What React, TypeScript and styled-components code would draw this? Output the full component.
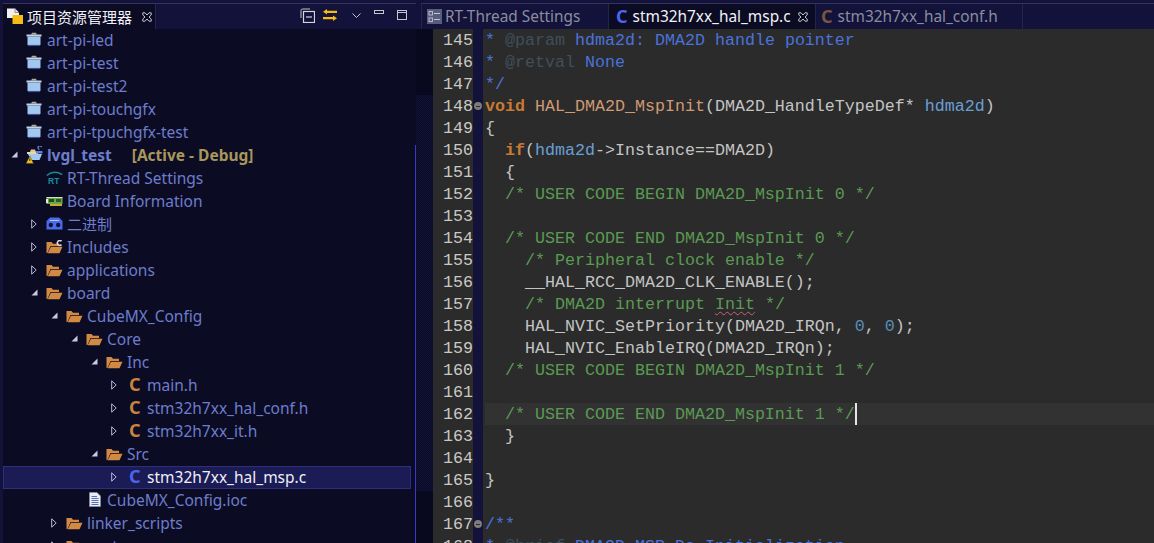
import React from "react";
import styled, { createGlobalStyle } from "styled-components";

const GlobalStyle = createGlobalStyle`
  html, body {
    margin: 0;
    padding: 0;
    background: #12123a;
    overflow: hidden;
  }
`;

const uiFont = `"Noto Sans", "Noto Sans CJK SC", sans-serif`;
const codeFont = `"Liberation Mono", "DejaVu Sans Mono", monospace`;

const Page = styled.div`
  display: flex;
  width: 1154px;
  height: 543px;
  overflow: hidden;
  background: #12123a;
`;

const LeftPanel = styled.div`
  display: flex;
  flex-direction: column;
  width: 413px;
  margin-left: 3px;
  flex-shrink: 0;
`;

const ViewHeader = styled.div`
  display: flex;
  align-items: stretch;
  height: 26px;
  margin-top: 3px;
  border-top: 1px solid #34345e;
  box-sizing: border-box;
  background: #12123a;
  flex-shrink: 0;
`;

const ViewTab = styled.div`
  display: flex;
  align-items: center;
  width: 153px;
  padding-left: 4px;
  box-sizing: border-box;
  background: #0b0b24;
  border-right: 1px solid #25254c;
  color: #f2f2f6;
  font: 15px ${uiFont};
`;

const ViewTitle = styled.span`
  margin-left: 4px;
  width: 108px;
  white-space: nowrap;
`;

const ViewTools = styled.div`
  display: flex;
  align-items: center;
  margin-left: 144px;
  padding-bottom: 3px;
  gap: 8px;
`;

const ToolIcon = styled.svg<{ $left?: number; $lift?: number }>`
  display: block;
  flex-shrink: 0;
  margin-left: ${(p) => p.$left ?? 0}px;
  margin-bottom: ${(p) => p.$lift ?? 0}px;
`;

const PanelBody = styled.div`
  display: flex;
  flex: 1;
  min-height: 0;
  background: #0b0b24;
`;

const Tree = styled.div`
  width: 408px;
  flex-shrink: 0;
  overflow: hidden;
`;

const ScrollTrack = styled.div`
  flex: 1;
  display: flex;
  justify-content: flex-end;
`;

const ScrollThumb = styled.div`
  width: 1px;
  margin-top: 116px;
  background: #3a3ac4;
`;

const Row = styled.div<{ $depth: number; $selected?: boolean }>`
  display: flex;
  align-items: center;
  height: 23px;
  box-sizing: border-box;
  padding-left: ${(p) => 4 + p.$depth * 20}px;
  padding-bottom: 2px;
  white-space: nowrap;
  font: 15.5px ${uiFont};
  color: ${(p) => (p.$selected ? "#eeeef6" : "#6d7dcb")};
  background: ${(p) => (p.$selected ? "#1b1b55" : "transparent")};
  outline: ${(p) => (p.$selected ? "1px solid #2e2e7c" : "none")};
  outline-offset: -1px;
`;

const Twist = styled.span`
  display: flex;
  align-items: center;
  justify-content: flex-start;
  width: 20px;
  height: 23px;
  padding-left: 4px;
  box-sizing: border-box;
  flex-shrink: 0;
`;

const IconSlot = styled.span<{ $inset: number }>`
  display: flex;
  align-items: center;
  justify-content: flex-start;
  width: 20px;
  height: 23px;
  flex-shrink: 0;
  & > * {
    margin-left: ${(p) => p.$inset}px;
  }
`;

const CIcon = styled.span<{ $color: string }>`
  display: block;
  font: bold 18px/23px ${uiFont};
  color: ${(p) => p.$color};
`;

const CjkLabel = styled.span`
  font-size: 15px;
`;

const BoldName = styled.span`
  font-weight: 700;
`;

const ActiveTag = styled.span`
  margin-left: 20px;
  font-weight: 700;
  color: #a8965a;
`;

const EditorArea = styled.div`
  display: flex;
  flex-direction: column;
  flex: 1;
  min-width: 0;
`;

const EditorTabs = styled.div`
  display: flex;
  align-items: stretch;
  height: 26px;
  margin-top: 3px;
  margin-left: 5px;
  border-top: 1px solid #34345e;
  box-sizing: border-box;
  background: #12123a;
  flex-shrink: 0;
  border-left: 1px solid #25254c;
`;

const EditorTab = styled.div<{ $width: number; $active?: boolean }>`
  display: flex;
  align-items: center;
  width: ${(p) => p.$width}px;
  padding-left: ${(p) => (p.$active ? 7 : 5)}px;
  box-sizing: border-box;
  flex-shrink: 0;
  background: ${(p) => (p.$active ? "#0b0b24" : "transparent")};
  border-right: 1px solid #25254c;
  color: ${(p) => (p.$active ? "#f2f2f6" : "#8b8d9f")};
  font: 15.4px ${uiFont};
  white-space: nowrap;
`;

const TabLabel = styled.span<{ $gap: number }>`
  margin-left: ${(p) => p.$gap}px;
`;

const TabClose = styled.span`
  display: flex;
  margin-left: 7px;
`;

const EditorBody = styled.div`
  display: flex;
  flex: 1;
  min-height: 0;
  background: #2b2b2b;
`;

const Ruler = styled.div`
  display: flex;
  flex-direction: column;
  width: 17px;
  flex-shrink: 0;
  background: #08081f;
`;

const RulerHatch = styled.div`
  height: 396px;
  margin-top: 66px;
  background-image: repeating-conic-gradient(#121238 0 25%, #0a0a24 0 50%);
  background-size: 2px 2px;
`;

const CodeLines = styled.div`
  flex: 1;
  min-width: 0;
  overflow: hidden;
`;

const CodeRow = styled.div`
  display: flex;
  height: 22px;
  font: 16.67px/24px ${codeFont};
  color: #c4c4c4;
`;

const LineNo = styled.div`
  width: 40px;
  text-align: right;
  color: #c9c9c4;
  flex-shrink: 0;
`;

const FoldCell = styled.div`
  display: flex;
  align-items: center;
  justify-content: center;
  width: 10px;
  background: #12123a;
  flex-shrink: 0;
`;

const FoldDot = styled.span`
  display: flex;
  align-items: center;
  justify-content: center;
  width: 8px;
  height: 8px;
  border-radius: 50%;
  background: #7c7c7c;
  &::after {
    content: "";
    width: 4px;
    height: 1px;
    background: #2b2b2b;
  }
`;

const CodeText = styled.div<{ $current?: boolean }>`
  flex: 1;
  margin-left: 2px;
  white-space: pre;
  background: ${(p) => (p.$current ? "#323232" : "transparent")};
`;

const tokenColors = {
  doc: "#4a72dc",
  tag: "#3f4f5c",
  kw: "#c97a34",
  fn: "#cf9a74",
  cm: "#5a9a52",
  var: "#6a9fd4",
  num: "#5b8db5",
};

const Tok = styled.span<{ $k: keyof typeof tokenColors }>`
  color: ${(p) => tokenColors[p.$k]};
  font-weight: ${(p) => (p.$k === "kw" ? 700 : 400)};
`;

const Squiggle = styled.span`
  text-decoration: underline wavy #d0607c 1px;
  text-underline-offset: 2px;
`;

const Caret = styled.span`
  display: inline-block;
  width: 2px;
  height: 22px;
  margin-right: -2px;
  vertical-align: top;
  background: #e6e6e6;
`;

const ArrowOpen = () => (
  <svg width="7" height="7" viewBox="0 0 7 7">
    <path d="M6.5 0.5V6.5H0.5Z" fill="#c9c9e4" />
  </svg>
);

const ArrowClosed = () => (
  <svg width="6" height="10" viewBox="0 0 6 10">
    <path d="M0.7 0.8L5.2 5L0.7 9.2Z" fill="none" stroke="#b9b9dc" strokeWidth="1" />
  </svg>
);

const ProjectFolder = () => (
  <svg width="16" height="15" viewBox="0 0 16 15">
    <path d="M5 2.5L6 0.8H10L11 2.5Z" fill="#b3ab8c" />
    <path d="M0.5 2.5H15.5V4.5H0.5Z" fill="#c3d3e8" />
    <path d="M1.5 4.5H14.5V12.5L13.5 13.5H2.5L1.5 12.5Z" fill="#a3c8f0" />
    <path d="M2 13.5H14" stroke="#3f4e96" strokeWidth="1.2" />
  </svg>
);

const OpenFolder = ({ dot }: { dot?: boolean }) => (
  <svg width="17" height="14" viewBox="0 0 17 14">
    <path d="M0.5 13V2H5.5L7 3.7H13V6H4.5L1.5 13Z" fill="#d28a42" />
    <path d="M1.7 13.3L4.9 6.8H16.5L13.5 13.3Z" fill="#d28a42" />
    {dot && <path d="M15.5 1.2A2.4 2.4 0 1 0 15.5 4.6" fill="none" stroke="#d8d8d8" strokeWidth="1.6" />}
  </svg>
);

const ActiveProject = () => (
  <svg width="17" height="18" viewBox="0 0 17 18">
    <path d="M4 6L5 3.5H9L10 6Z" fill="#e8c890" />
    <path d="M1 6H12V8H1Z" fill="#e9d9a8" />
    <path d="M2 8H16L13.5 14H5Z" fill="#a3c8f0" />
    <path d="M10 5H16.5V7.5H10Z" fill="#5f80d8" />
    <path d="M13.5 3.5A1.8 1.8 0 1 1 15.5 1.2" fill="none" stroke="#6d8fe6" strokeWidth="1.2" />
    <path d="M3.8 10L7.6 17.4H0Z" fill="#f0c020" stroke="#2a2a10" strokeWidth="0.4" />
    <rect x="3.4" y="12.4" width="0.9" height="2.6" fill="#201a00" />
  </svg>
);

const RtIcon = () => (
  <svg width="17" height="14" viewBox="0 0 17 14">
    <path d="M0.8 4.5Q8 -1.4 16.2 3.6" fill="none" stroke="#178a92" strokeWidth="1.6" />
    <text x="2" y="13" fontSize="8.5" fontWeight="700" fontFamily="Liberation Sans, sans-serif" fill="#17909a">
      RT
    </text>
  </svg>
);

const BoardIcon = () => (
  <svg width="17" height="12" viewBox="0 0 17 12">
    <rect x="0.5" y="2" width="16" height="7" fill="#6aa844" />
    <rect x="0.5" y="2" width="16" height="1" fill="#d8d8d8" />
    <rect x="3" y="4" width="5" height="3" fill="#234a20" />
    <rect x="10" y="4" width="5" height="3" fill="#2d5a2a" />
    <rect x="0" y="4" width="2" height="4" fill="#e8e8e8" />
    <rect x="4" y="9" width="12" height="2" fill="#c7a93c" />
  </svg>
);

const BinaryIcon = () => (
  <svg width="17" height="13" viewBox="0 0 17 13">
    <path d="M4 0.5H13L16.5 4V12.5H0.5V4Z" fill="#4a6be8" />
    <circle cx="4.8" cy="8" r="2.2" fill="#10103a" />
    <circle cx="12.2" cy="8" r="2.2" fill="#10103a" />
    <rect x="4" y="3" width="9" height="1" fill="#b8c4f4" />
  </svg>
);

const DocIcon = () => (
  <svg width="12" height="15" viewBox="0 0 12 15">
    <path d="M0.5 0.5H8L11.5 4V14.5H0.5Z" fill="#e8ecf4" stroke="#8a94b0" strokeWidth="0.6" />
    <path d="M2.5 4.5H8M2.5 6.5H9.5M2.5 8.5H9.5M2.5 10.5H9.5M2.5 12.5H9.5" stroke="#5670b0" strokeWidth="1" />
  </svg>
);

const ViewIcon = () => (
  <svg width="16" height="17" viewBox="0 0 16 17">
    <path d="M0 0.5H8L12 4.5V10H0Z" fill="#f0f0f0" />
    <path d="M8 0.5V4.5H12" fill="none" stroke="#777" strokeWidth="0.8" />
    <rect x="5.5" y="7" width="10.5" height="9" fill="#f5bb12" />
  </svg>
);

const CloseX = () => (
  <svg width="10" height="10" viewBox="0 0 10 10">
    <path
      d="M0.8 0.8H3L5 3L7 0.8H9.2V3L7 5L9.2 7V9.2H7L5 7L3 9.2H0.8V7L3 5L0.8 3Z"
      fill="none"
      stroke="#c4c4cc"
      strokeWidth="1"
    />
  </svg>
);

const SettingsIcon = () => (
  <svg width="15" height="15" viewBox="0 0 15 15">
    <rect x="0" y="0" width="15" height="15" fill="#5a5c7c" />
    <rect x="2" y="2.5" width="3.5" height="3.5" fill="none" stroke="#c2c4d4" strokeWidth="0.9" />
    <rect x="2" y="9" width="3.5" height="3.5" fill="none" stroke="#c2c4d4" strokeWidth="0.9" />
    <path d="M7 4.5H13M7 10.5H13" stroke="#c2c4d4" strokeWidth="1" />
  </svg>
);

const Tools = () => (
  <ViewTools>
    <ToolIcon width="15" height="15" viewBox="0 0 15 15">
      <path d="M1 10V2.5A1.5 1.5 0 0 1 2.5 1H10" fill="none" stroke="#c4c4cc" strokeWidth="1" />
      <rect x="3.5" y="3.5" width="11" height="11" fill="none" stroke="#d4d4da" strokeWidth="1.2" />
      <path d="M6 9H12" stroke="#d4d4da" strokeWidth="1.2" />
    </ToolIcon>
    <ToolIcon width="14" height="12" viewBox="0 0 14 12">
      <path d="M4 1.7V0L0 2.8L4 5.6V3.9H14V1.7Z" fill="#f5bb12" />
      <path d="M10 8.1H0V10.3H10V12L14 9.2L10 6.4Z" fill="#f5bb12" />
    </ToolIcon>
    <ToolIcon width="9" height="5" viewBox="0 0 9 5" $left={7}>
      <path d="M0.5 0.5L4.5 4.5L8.5 0.5" fill="none" stroke="#c4c4cc" strokeWidth="1" />
    </ToolIcon>
    <ToolIcon width="10" height="4" viewBox="0 0 10 4" $left={5} $lift={6}>
      <rect x="0.5" y="0.5" width="9" height="3" fill="none" stroke="#c4c4cc" strokeWidth="1" />
    </ToolIcon>
    <ToolIcon width="10" height="10" viewBox="0 0 10 10" $left={5}>
      <rect x="0.5" y="0.5" width="9" height="9" fill="none" stroke="#c4c4cc" strokeWidth="1" />
      <path d="M0.5 2.5H9.5" stroke="#c4c4cc" strokeWidth="1" />
    </ToolIcon>
  </ViewTools>
);

type TreeItem = {
  depth: number;
  label: React.ReactNode;
  icon: React.ReactNode;
  inset?: number;
  arrow?: "open" | "closed";
  selected?: boolean;
  active?: boolean;
};

const headerIcon = <CIcon $color="#c9843e">C</CIcon>;

const treeItems: TreeItem[] = [
  { depth: 0, label: "art-pi-led", icon: <ProjectFolder /> },
  { depth: 0, label: "art-pi-test", icon: <ProjectFolder /> },
  { depth: 0, label: "art-pi-test2", icon: <ProjectFolder /> },
  { depth: 0, label: "art-pi-touchgfx", icon: <ProjectFolder /> },
  { depth: 0, label: "art-pi-tpuchgfx-test", icon: <ProjectFolder /> },
  { depth: 0, label: "lvgl_test", icon: <ActiveProject />, arrow: "open", active: true },
  { depth: 1, label: "RT-Thread Settings", icon: <RtIcon /> },
  { depth: 1, label: "Board Information", icon: <BoardIcon /> },
  { depth: 1, label: <CjkLabel>二进制</CjkLabel>, icon: <BinaryIcon />, arrow: "closed" },
  { depth: 1, label: "Includes", icon: <OpenFolder dot />, arrow: "closed" },
  { depth: 1, label: "applications", icon: <OpenFolder />, arrow: "closed" },
  { depth: 1, label: "board", icon: <OpenFolder />, arrow: "open" },
  { depth: 2, label: "CubeMX_Config", icon: <OpenFolder />, arrow: "open" },
  { depth: 3, label: "Core", icon: <OpenFolder />, arrow: "open" },
  { depth: 4, label: "Inc", icon: <OpenFolder />, arrow: "open" },
  { depth: 5, label: "main.h", icon: headerIcon, inset: 2, arrow: "closed" },
  { depth: 5, label: "stm32h7xx_hal_conf.h", icon: headerIcon, inset: 2, arrow: "closed" },
  { depth: 5, label: "stm32h7xx_it.h", icon: headerIcon, inset: 2, arrow: "closed" },
  { depth: 4, label: "Src", icon: <OpenFolder />, arrow: "open" },
  {
    depth: 5,
    label: "stm32h7xx_hal_msp.c",
    icon: <CIcon $color="#4a66ee">C</CIcon>,
    inset: 2,
    arrow: "closed",
    selected: true,
  },
  { depth: 3, label: "CubeMX_Config.ioc", icon: <DocIcon />, inset: 2 },
  { depth: 2, label: "linker_scripts", icon: <OpenFolder />, arrow: "closed" },
  { depth: 2, label: "ports", icon: <OpenFolder />, arrow: "closed" },
];

const usr = (phase: string, n: number) => `/* USER CODE ${phase} DMA2D_MspInit ${n} */`;

const codeLines: { no: number; fold?: boolean; current?: boolean; body: React.ReactNode }[] = [
  {
    no: 145,
    body: (
      <>
        <Tok $k="doc">* </Tok>
        <Tok $k="tag">@param</Tok>
        <Tok $k="doc"> hdma2d: DMA2D handle pointer</Tok>
      </>
    ),
  },
  {
    no: 146,
    body: (
      <>
        <Tok $k="doc">* </Tok>
        <Tok $k="tag">@retval</Tok>
        <Tok $k="doc"> None</Tok>
      </>
    ),
  },
  { no: 147, body: <Tok $k="doc">*/</Tok> },
  {
    no: 148,
    fold: true,
    body: (
      <>
        <Tok $k="kw">void</Tok> <Tok $k="fn">HAL_DMA2D_MspInit</Tok>(DMA2D_HandleTypeDef* <Tok $k="var">hdma2d</Tok>)
      </>
    ),
  },
  { no: 149, body: "{" },
  {
    no: 150,
    body: (
      <>
        {"  "}
        <Tok $k="kw">if</Tok>(<Tok $k="var">hdma2d</Tok>{"->Instance==DMA2D)"}
      </>
    ),
  },
  { no: 151, body: "  {" },
  { no: 152, body: <Tok $k="cm">{"  " + usr("BEGIN", 0)}</Tok> },
  { no: 153, body: "" },
  { no: 154, body: <Tok $k="cm">{"  " + usr("END", 0)}</Tok> },
  { no: 155, body: <Tok $k="cm">{"    /* Peripheral clock enable */"}</Tok> },
  { no: 156, body: "    __HAL_RCC_DMA2D_CLK_ENABLE();" },
  {
    no: 157,
    body: (
      <Tok $k="cm">
        {"    /* DMA2D interrupt "}
        <Squiggle>Init</Squiggle>
        {" */"}
      </Tok>
    ),
  },
  {
    no: 158,
    body: (
      <>
        {"    HAL_NVIC_SetPriority(DMA2D_IRQn, "}
        <Tok $k="num">0</Tok>, <Tok $k="num">0</Tok>);
      </>
    ),
  },
  { no: 159, body: "    HAL_NVIC_EnableIRQ(DMA2D_IRQn);" },
  { no: 160, body: <Tok $k="cm">{"  " + usr("BEGIN", 1)}</Tok> },
  { no: 161, body: "" },
  {
    no: 162,
    current: true,
    body: (
      <>
        <Tok $k="cm">{"  " + usr("END", 1)}</Tok>
        <Caret />
      </>
    ),
  },
  { no: 163, body: "  }" },
  { no: 164, body: "" },
  { no: 165, body: "}" },
  { no: 166, body: "" },
  { no: 167, fold: true, body: <Tok $k="doc">/**</Tok> },
  {
    no: 168,
    body: (
      <>
        <Tok $k="doc">* </Tok>
        <Tok $k="tag">@brief</Tok>
        <Tok $k="doc"> DMA2D MSP De-Initialization</Tok>
      </>
    ),
  },
];

const App = () => (
  <Page>
    <GlobalStyle />
    <LeftPanel>
      <ViewHeader>
        <ViewTab>
          <ViewIcon />
          <ViewTitle>项目资源管理器</ViewTitle>
          <TabClose>
            <CloseX />
          </TabClose>
        </ViewTab>
        <Tools />
      </ViewHeader>
      <PanelBody>
        <Tree>
          {treeItems.map((item, index) => (
            <Row key={index} $depth={item.depth} $selected={item.selected}>
              <Twist>
                {item.arrow === "open" && <ArrowOpen />}
                {item.arrow === "closed" && <ArrowClosed />}
              </Twist>
              <IconSlot $inset={item.inset ?? -1}>{item.icon}</IconSlot>
              {item.active ? (
                <>
                  <BoldName>{item.label}</BoldName>
                  <ActiveTag>[Active - Debug]</ActiveTag>
                </>
              ) : (
                item.label
              )}
            </Row>
          ))}
        </Tree>
        <ScrollTrack>
          <ScrollThumb />
        </ScrollTrack>
      </PanelBody>
    </LeftPanel>
    <EditorArea>
      <EditorTabs>
        <EditorTab $width={187}>
          <SettingsIcon />
          <TabLabel $gap={3}>RT-Thread Settings</TabLabel>
        </EditorTab>
        <EditorTab $width={207} $active>
          <CIcon $color="#4a66ee">C</CIcon>
          <TabLabel $gap={5}>stm32h7xx_hal_msp.c</TabLabel>
          <TabClose>
            <CloseX />
          </TabClose>
        </EditorTab>
        <EditorTab $width={207}>
          <CIcon $color="#7a5540">C</CIcon>
          <TabLabel $gap={5}>stm32h7xx_hal_conf.h</TabLabel>
        </EditorTab>
      </EditorTabs>
      <EditorBody>
        <Ruler>
          <RulerHatch />
        </Ruler>
        <CodeLines>
          {codeLines.map((line) => (
            <CodeRow key={line.no}>
              <LineNo>{line.no}</LineNo>
              <FoldCell>{line.fold && <FoldDot />}</FoldCell>
              <CodeText $current={line.current}>{line.body}</CodeText>
            </CodeRow>
          ))}
        </CodeLines>
      </EditorBody>
    </EditorArea>
  </Page>
);

export default App;
